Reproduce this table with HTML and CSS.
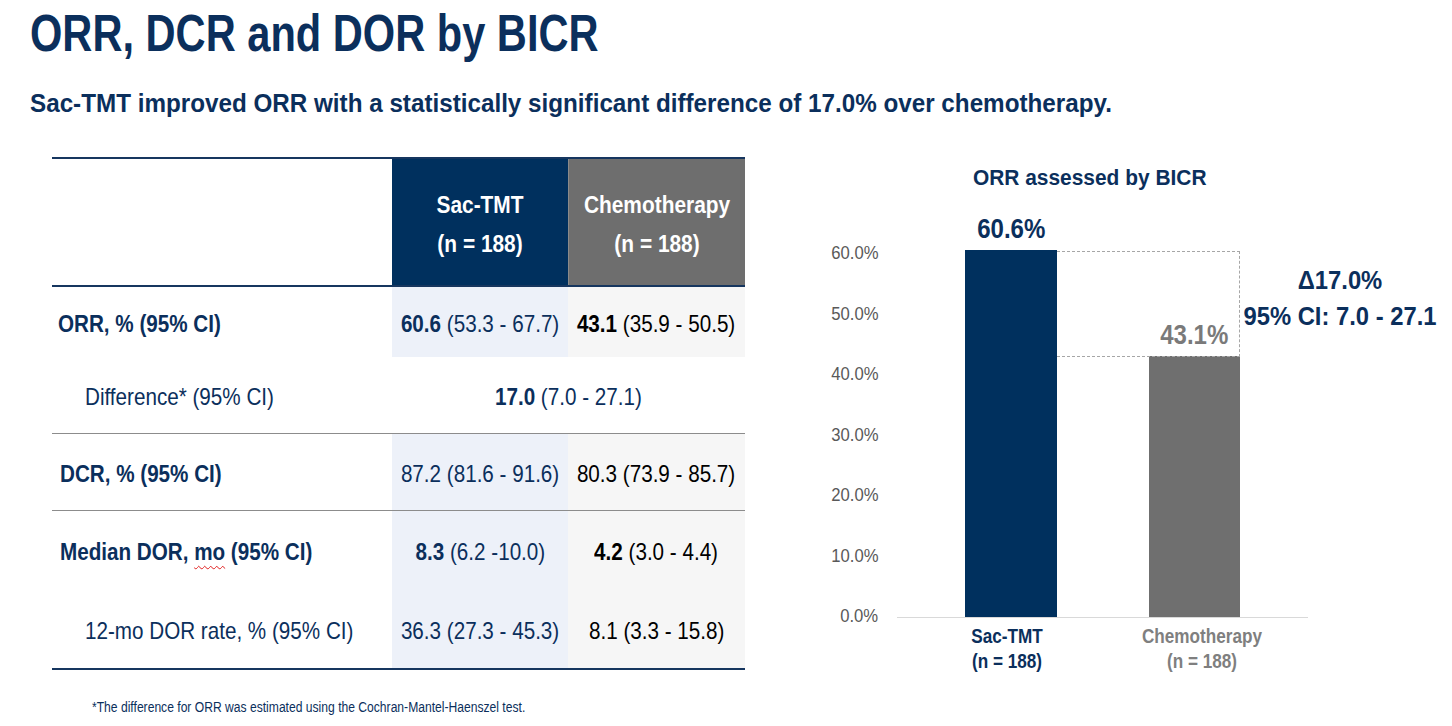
FILE: index.html
```html
<!DOCTYPE html>
<html lang="en">
<head>
<meta charset="utf-8">
<title>ORR, DCR and DOR by BICR</title>
<link rel="stylesheet" href="styles.css">
</head>
<body>
  <header class="hdr">
    <h1 class="title">ORR, DCR and DOR by BICR</h1>
    <p class="subtitle">Sac-TMT improved ORR with a statistically significant difference of 17.0% over chemotherapy.</p>
  </header>

  <main class="content">
    <section class="tbl-wrap">
      <div class="tbl">
        <div class="row head">
          <div class="cell"></div>
          <div class="cell hc hc-sac"><span class="t">Sac-TMT</span><span class="t">(n = 188)</span></div>
          <div class="cell hc hc-chemo"><span class="t">Chemotherapy</span><span class="t">(n = 188)</span></div>
        </div>
        <div class="row r-orr">
          <div class="cell lbl bold"><span class="t">ORR, % (95% CI)</span></div>
          <div class="cell val sac"><span class="t"><b>60.6</b> (53.3 - 67.7)</span></div>
          <div class="cell val chemo"><span class="t"><b>43.1</b> (35.9 - 50.5)</span></div>
        </div>
        <div class="row r-diff">
          <div class="cell lbl indent"><span class="t">Difference* (95% CI)</span></div>
          <div class="cell val span2 sac-text"><span class="t"><b>17.0</b> (7.0 - 27.1)</span></div>
        </div>
        <div class="row r-dcr">
          <div class="cell lbl bold"><span class="t">DCR, % (95% CI)</span></div>
          <div class="cell val sac"><span class="t">87.2 (81.6 - 91.6)</span></div>
          <div class="cell val chemo"><span class="t">80.3 (73.9 - 85.7)</span></div>
        </div>
        <div class="row r-med">
          <div class="cell lbl bold"><span class="t">Median DOR, <span class="squiggle">mo</span> (95% CI)</span></div>
          <div class="cell val sac"><span class="t"><b>8.3</b> (6.2 -10.0)</span></div>
          <div class="cell val chemo"><span class="t"><b>4.2</b> (3.0 - 4.4)</span></div>
        </div>
        <div class="row r-12">
          <div class="cell lbl indent"><span class="t">12-mo DOR rate, % (95% CI)</span></div>
          <div class="cell val sac"><span class="t">36.3 (27.3 - 45.3)</span></div>
          <div class="cell val chemo"><span class="t">8.1 (3.3 - 15.8)</span></div>
        </div>
      </div>
      <p class="footnote">*The difference for ORR was estimated using the Cochran-Mantel-Haenszel test.</p>
    </section>

    <section class="chart">
      <h2 class="chart-title">ORR assessed by BICR</h2>
      <div class="plot-row">
        <div class="yaxis">
          <div class="tick"><span class="tk">60.0%</span></div>
          <div class="tick"><span class="tk">50.0%</span></div>
          <div class="tick"><span class="tk">40.0%</span></div>
          <div class="tick"><span class="tk">30.0%</span></div>
          <div class="tick"><span class="tk">20.0%</span></div>
          <div class="tick"><span class="tk">10.0%</span></div>
          <div class="tick"><span class="tk">0.0%</span></div>
        </div>
        <div class="plot">
          <div class="bar-col bc-sac">
            <div class="bar-val v-sac">60.6%</div>
            <div class="bar b-sac" style="height:366.6px"></div>
          </div>
          <div class="bar-col bc-chemo">
            <div class="bar-val v-chemo">43.1%</div>
            <div class="bar b-chemo" style="height:260.8px"></div>
          </div>
          <div class="bracket"></div>
          <div class="delta">
            <div>&Delta;17.0%</div>
            <div>95% CI: 7.0 - 27.1</div>
          </div>
        </div>
      </div>
      <div class="xlabels">
        <div class="xl xl-sac">Sac-TMT<br>(n = 188)</div>
        <div class="xl xl-chemo">Chemotherapy<br>(n = 188)</div>
      </div>
    </section>
  </main>
</body>
</html>
```

FILE: styles.css
```css
* { box-sizing: border-box; }

html, body {
  margin: 0;
  padding: 0;
  background: #ffffff;
}

body {
  width: 1452px;
  height: 726px;
  overflow: hidden;
  font-family: "Liberation Sans", Arial, sans-serif;
  color: #0b2f5c;
}

/* ---------- header ---------- */
.hdr {
  padding: 7px 0 0 30px;
}

.title {
  margin: 0;
  font-size: 52px;
  line-height: 53px;
  font-weight: 700;
  color: #0b2f5c;
  white-space: nowrap;
  transform: scaleX(0.8);
  transform-origin: 0 0;
}

.subtitle {
  margin: 30px 0 0 0;
  font-size: 25.5px;
  line-height: 26px;
  font-weight: 700;
  color: #0b2f5c;
  white-space: nowrap;
  transform: scaleX(0.95);
  transform-origin: 0 0;
}

.content {
  display: flex;
  align-items: flex-start;
  padding-left: 52px;
  margin-top: 41px;
}

/* ---------- table ---------- */
.tbl-wrap {
  width: 693px;
  flex: none;
}

.tbl {
  display: flex;
  flex-direction: column;
}

.row {
  display: grid;
  grid-template-columns: 340px 176px 177px;
}

.cell {
  display: flex;
  align-items: center;
  font-size: 24px;
  white-space: nowrap;
  min-width: 0;
}

.t {
  display: inline-block;
  flex: none;
  white-space: nowrap;
  transform: scaleX(0.86);
}

.lbl .t { transform-origin: 0 50%; }

.head {
  height: 130px;
  border-top: 2px solid #16365f;
  border-bottom: 2px solid #16365f;
}

.hc {
  flex-direction: column;
  justify-content: center;
  color: #ffffff;
  font-weight: 700;
  line-height: 39px;
  padding-top: 3px;
}

.hc .t { transform: scaleX(0.87); }

.hc-sac { background: #00305e; }
.hc-chemo { background: #6e6e6e; border-left: 1px solid #8a8a8a; }

.r-orr { height: 70px; }
.r-diff { height: 77px; border-bottom: 1px solid #8c8c8c; }
.r-dcr { height: 77px; border-bottom: 1px solid #8c8c8c; }
.r-med { height: 79px; }
.r-12 { height: 80px; border-bottom: 2px solid #16365f; }

.lbl {
  color: #0b2f5c;
  padding-top: 3px;
}

.lbl.bold {
  font-weight: 700;
  padding-left: 6px;
}

.r-dcr .lbl.bold,
.r-med .lbl.bold { padding-left: 8px; }

.lbl.indent {
  padding-left: 33px;
}

.val {
  justify-content: center;
  padding-top: 3px;
}

.val b { font-weight: 700; }

.sac {
  background: #edf1f9;
  color: #0b2f5c;
}

.chemo {
  background: #f6f6f6;
  color: #000000;
}

.sac-text { color: #0b2f5c; }

.span2 {
  grid-column: 2 / 4;
}

.squiggle {
  text-decoration: underline wavy #e02020;
  text-decoration-thickness: 1px;
  text-underline-offset: 5px;
}

.footnote {
  margin: 30px 0 0 40px;
  font-size: 14px;
  line-height: 14px;
  color: #0b2f5c;
  white-space: nowrap;
  transform: scaleX(0.865);
  transform-origin: 0 0;
}

/* ---------- chart ---------- */
.chart {
  width: 652px;
  margin-left: 55px;
  flex: none;
}

.chart-title {
  margin: 10px 0 0 173px;
  font-size: 22px;
  line-height: 22px;
  font-weight: 700;
  color: #0b2f5c;
  white-space: nowrap;
  transform: scaleX(0.95);
  transform-origin: 0 0;
}

.plot-row {
  display: flex;
  align-items: flex-start;
  margin-top: 11px;
  height: 418px;
}

.yaxis {
  width: 78px;
  height: 418px;
  padding-top: 23px;
  display: flex;
  flex-direction: column;
}

.tick {
  flex: none;
  height: 60.5px;
  line-height: 60.5px;
  text-align: right;
  font-size: 18.5px;
  color: #595959;
}

.tk {
  display: inline-block;
  transform: scaleX(0.9);
  transform-origin: 100% 50%;
}

.plot {
  position: relative;
  margin-left: 19px;
  width: 411px;
  height: 418px;
  border-bottom: 1px solid #d9d9d9;
  display: flex;
  align-items: flex-end;
}

.bar-col {
  display: flex;
  flex-direction: column;
  align-items: center;
}

.bc-sac { margin-left: 68px; width: 92px; }
.bc-chemo { margin-left: 92px; width: 91px; }

.bar { width: 100%; }
.b-sac { background: #00305e; }
.b-chemo { background: #6f6f6f; }

.bar-val {
  font-size: 27px;
  line-height: 27px;
  font-weight: 700;
  margin-bottom: 7px;
  white-space: nowrap;
  transform: scaleX(0.89);
}

.v-sac { color: #0b2f5c; }
.v-chemo { color: #7a7a7a; }

.bracket {
  position: absolute;
  left: 160px;
  top: 51px;
  width: 183px;
  height: 106px;
  border: 1px dashed #a6a6a6;
  border-left: none;
  pointer-events: none;
}

.delta {
  position: absolute;
  left: 333px;
  top: 62px;
  width: 220px;
  text-align: center;
  font-size: 26px;
  line-height: 36px;
  font-weight: 700;
  color: #0b2f5c;
  white-space: nowrap;
  transform: scaleX(0.915);
}

.xlabels {
  display: flex;
  margin-left: 97px;
  margin-top: 6px;
  padding-left: 35px;
  gap: 45px;
}

.xl {
  width: 150px;
  text-align: center;
  font-size: 19.5px;
  line-height: 25px;
  font-weight: 700;
  transform: scaleX(0.88);
}

.xl-sac { color: #0b2f5c; }
.xl-chemo { color: #7f7f7f; }
```
